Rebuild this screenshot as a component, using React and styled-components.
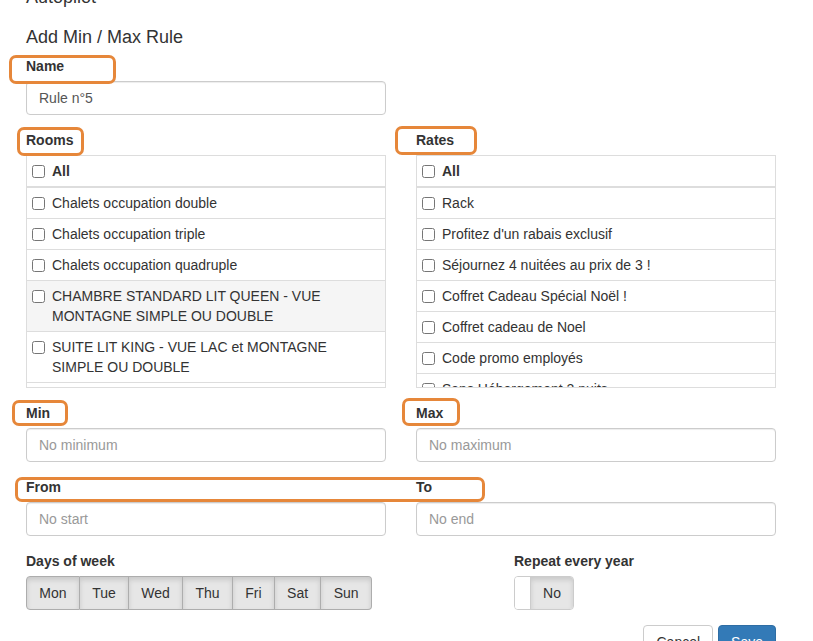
import styled, { createGlobalStyle } from "styled-components";

const GlobalStyle = createGlobalStyle`
  html, body {
    margin: 0;
    padding: 0;
    overflow: hidden;
    background: #fff;
  }
  body {
    font-family: "Liberation Sans", Arial, sans-serif;
    font-size: 14px;
    line-height: 20px;
    color: #333;
  }
  * {
    box-sizing: border-box;
  }
`;

const Page = styled.div`
  position: relative;
  width: 813px;
  padding: 0 0 0 26px;
  margin-top: -12px;
`;

const Heading = styled.h4`
  font-size: 18px;
  font-weight: 500;
  line-height: 19.8px;
  margin: 0 0 8px;
  & + & {
    margin-top: 20px;
  }
`;

const Row = styled.div`
  display: grid;
  grid-template-columns: ${(p) => p.$cols || "360px 360px"};
  column-gap: 30px;
`;

const Group = styled.div`
  margin-bottom: 15px;
`;

const Label = styled.label`
  display: block;
  font-weight: 700;
  margin-bottom: 5px;
`;

const Input = styled.input`
  display: block;
  width: 360px;
  height: 34px;
  padding: 6px 12px;
  font-family: inherit;
  font-size: 14px;
  color: #555;
  background: #fff;
  border: 1px solid #ccc;
  border-radius: 4px;
  box-shadow: inset 0 1px 1px rgba(0, 0, 0, 0.075);
  outline: none;
  &::placeholder {
    color: #999;
  }
`;

const ListBox = styled.div`
  width: 360px;
  height: 233px;
  border: 1px solid #ddd;
  overflow: hidden;
`;

const ListRow = styled.div`
  display: flex;
  align-items: flex-start;
  padding: 5px;
  background: ${(p) => (p.$hover ? "#f5f5f5" : "#fff")};
  border-top: 1px solid #ddd;
  font-weight: ${(p) => (p.$head ? 700 : 400)};

  &:first-child {
    border-top: none;
    border-bottom: 2px solid #ddd;
  }
  &:nth-child(2) {
    border-top: none;
  }
`;

const Check = styled.input.attrs({ type: "checkbox" })`
  flex: none;
  width: 13px;
  height: 13px;
  margin: 4px 7px 0 0;
`;

const Days = styled.div`
  display: flex;
  width: max-content;
`;

const DayBtn = styled.button`
  font-family: inherit;
  font-size: 14px;
  line-height: 20px;
  color: #333;
  padding: 6px 12.3px;
  background: #e6e6e6;
  border: 1px solid #adadad;
  border-left-width: 0;
  box-shadow: inset 0 3px 5px rgba(0, 0, 0, 0.125);
  &:first-child {
    border-left-width: 1px;
    border-radius: 4px 0 0 4px;
  }
  &:last-child {
    border-radius: 0 4px 4px 0;
  }
`;

const Switch = styled.div`
  display: flex;
  width: max-content;
  height: 34px;
  border: 1px solid #ccc;
  border-radius: 4px;
  overflow: hidden;
`;

const Handle = styled.span`
  width: 16px;
  background: #fff;
  border-right: 1px solid #ccc;
`;

const SwitchOff = styled.span`
  width: 42px;
  display: flex;
  align-items: center;
  justify-content: center;
  background: #e6e6e6;
  box-shadow: inset 0 3px 5px rgba(0, 0, 0, 0.125);
`;

const Actions = styled.div`
  width: 750px;
  display: flex;
  justify-content: flex-end;
  gap: 5px;
`;

const Button = styled.button`
  font-family: inherit;
  font-size: 14px;
  line-height: 20px;
  padding: 6px 12px;
  border-radius: 4px;
  border: 1px solid ${(p) => (p.$primary ? "#2e6da4" : "#ccc")};
  background: ${(p) => (p.$primary ? "#337ab7" : "#fff")};
  color: ${(p) => (p.$primary ? "#fff" : "#333")};
`;

const Mark = styled.div`
  position: absolute;
  border: 3px solid #e6873a;
  border-radius: 7px;
  pointer-events: none;
`;

const rooms = [
  "Chalets occupation double",
  "Chalets occupation triple",
  "Chalets occupation quadruple",
  "CHAMBRE STANDARD LIT QUEEN - VUE MONTAGNE SIMPLE OU DOUBLE",
  "SUITE LIT KING - VUE LAC et MONTAGNE SIMPLE OU DOUBLE",
  "SUITE LIT KING - VUE LAC et MONTAGNE",
];

const rates = [
  "Rack",
  "Profitez d'un rabais exclusif",
  "Séjournez 4 nuitées au prix de 3 !",
  "Coffret Cadeau Spécial Noël !",
  "Coffret cadeau de Noel",
  "Code promo employés",
  "Sans Hébergement 2 nuits",
];

const days = ["Mon", "Tue", "Wed", "Thu", "Fri", "Sat", "Sun"];

// orange annotation boxes drawn over the form (page offset is -12px)
const marks = [
  { l: 9, t: 67, w: 107, h: 29 },
  { l: 17, t: 139, w: 67, h: 29 },
  { l: 395, t: 138, w: 82, h: 29 },
  { l: 12, t: 412, w: 56, h: 26 },
  { l: 402, t: 410, w: 58, h: 28 },
  { l: 15, t: 489, w: 470, h: 25 },
];

const CheckList = ({ items, hover }) => (
  <ListBox>
    <ListRow $head>
      <Check />
      All
    </ListRow>
    {items.map((item, i) => (
      <ListRow key={i} $hover={i === hover}>
        <Check />
        <span>{item}</span>
      </ListRow>
    ))}
  </ListBox>
);

const App = () => (
  <>
    <GlobalStyle />
    <Page>
      <Heading>Autopilot</Heading>
      <Heading>Add Min / Max Rule</Heading>

      <Group>
        <Label>Name</Label>
        <Input defaultValue="Rule n°5" />
      </Group>

      <Row>
        <Group>
          <Label>Rooms</Label>
          <CheckList items={rooms} hover={3} />
        </Group>
        <Group>
          <Label>Rates</Label>
          <CheckList items={rates} />
        </Group>
      </Row>

      <Row>
        <Group>
          <Label>Min</Label>
          <Input placeholder="No minimum" />
        </Group>
        <Group>
          <Label>Max</Label>
          <Input placeholder="No maximum" />
        </Group>
      </Row>

      <Row>
        <Group>
          <Label>From</Label>
          <Input placeholder="No start" />
        </Group>
        <Group>
          <Label>To</Label>
          <Input placeholder="No end" />
        </Group>
      </Row>

      <Row $cols="458px 1fr">
        <Group>
          <Label>Days of week</Label>
          <Days>
            {days.map((d) => (
              <DayBtn key={d}>{d}</DayBtn>
            ))}
          </Days>
        </Group>
        <Group>
          <Label>Repeat every year</Label>
          <Switch>
            <Handle />
            <SwitchOff>No</SwitchOff>
          </Switch>
        </Group>
      </Row>

      <Actions>
        <Button>Cancel</Button>
        <Button $primary>Save</Button>
      </Actions>

      {marks.map((m, i) => (
        <Mark
          key={i}
          style={{ left: m.l, top: m.t, width: m.w, height: m.h }}
        />
      ))}
    </Page>
  </>
);

export default App;
